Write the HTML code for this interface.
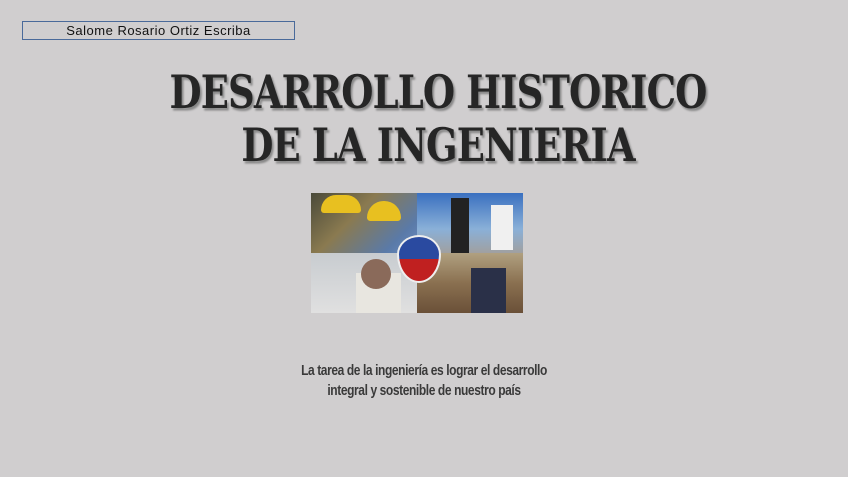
<!DOCTYPE html>
<html><head><meta charset="utf-8"><style>
body{margin:0;width:848px;height:477px;background:#d0cecf;position:relative;overflow:hidden;font-family:"Liberation Sans",sans-serif}
.name{position:absolute;left:22px;top:21px;width:271px;height:17px;border:1px solid #4a6a9a;font-size:13px;line-height:17px;text-align:center;color:#111;letter-spacing:0.5px}
.t{position:absolute;left:14px;width:848px;text-align:center;font-family:"DejaVu Serif",serif;font-weight:bold;font-size:42px;color:#262626;text-shadow:2px 2px 2px #888;transform:scale(0.88,1.08);letter-spacing:-1px;white-space:nowrap}
.img{position:absolute;left:311px;top:193px;width:212px;height:120px;overflow:hidden}
.q{position:absolute}
.cap{position:absolute;left:0;width:848px;text-align:center;font-size:15px;font-weight:bold;color:#3a3a3a;line-height:20px;top:361px;transform:scaleX(0.8);letter-spacing:-0.5px}
</style></head><body>
<div class="name">Salome Rosario Ortiz Escriba</div>
<div class="t" style="top:68px">DESARROLLO HISTORICO</div>
<div class="t" style="top:121px">DE LA INGENIERIA</div>
<div class="img">
<div class="q" style="left:0;top:0;width:106px;height:60px;background:linear-gradient(135deg,#4a4a3a,#8a7a50 40%,#5a7aa8 80%,#6a8ac0)"></div>
<div class="q" style="left:10px;top:2px;width:40px;height:18px;background:#e8c020;border-radius:20px 20px 4px 4px"></div>
<div class="q" style="left:56px;top:8px;width:34px;height:20px;background:#e8c020;border-radius:20px 20px 4px 4px"></div>
<div class="q" style="left:106px;top:0;width:106px;height:60px;background:linear-gradient(180deg,#3a70c0,#8ab0d8 60%,#a0a0a0)"></div>
<div class="q" style="left:140px;top:5px;width:18px;height:55px;background:#222"></div>
<div class="q" style="left:180px;top:12px;width:22px;height:45px;background:#f0f0f0"></div>
<div class="q" style="left:0;top:60px;width:106px;height:60px;background:linear-gradient(180deg,#c8ccd0,#e0e0e0)"></div>
<div class="q" style="left:45px;top:80px;width:45px;height:40px;background:#e8e6e0"></div>
<div class="q" style="left:50px;top:66px;width:30px;height:30px;background:#8a6a5a;border-radius:50%"></div>
<div class="q" style="left:106px;top:60px;width:106px;height:60px;background:linear-gradient(180deg,#b0a080,#8a7050 50%,#6a5038)"></div>
<div class="q" style="left:160px;top:75px;width:35px;height:45px;background:#2a3048"></div>
<div class="q" style="left:86px;top:42px;width:40px;height:44px;background:linear-gradient(180deg,#2a4aa0 50%,#c02020 50%);border-radius:50% 50% 50% 50%/40% 40% 60% 60%;border:2px solid #eee"></div>
</div>
<div class="cap">La tarea de la ingeniería es lograr el desarrollo<br>integral y sostenible de nuestro país</div>
</body></html>
